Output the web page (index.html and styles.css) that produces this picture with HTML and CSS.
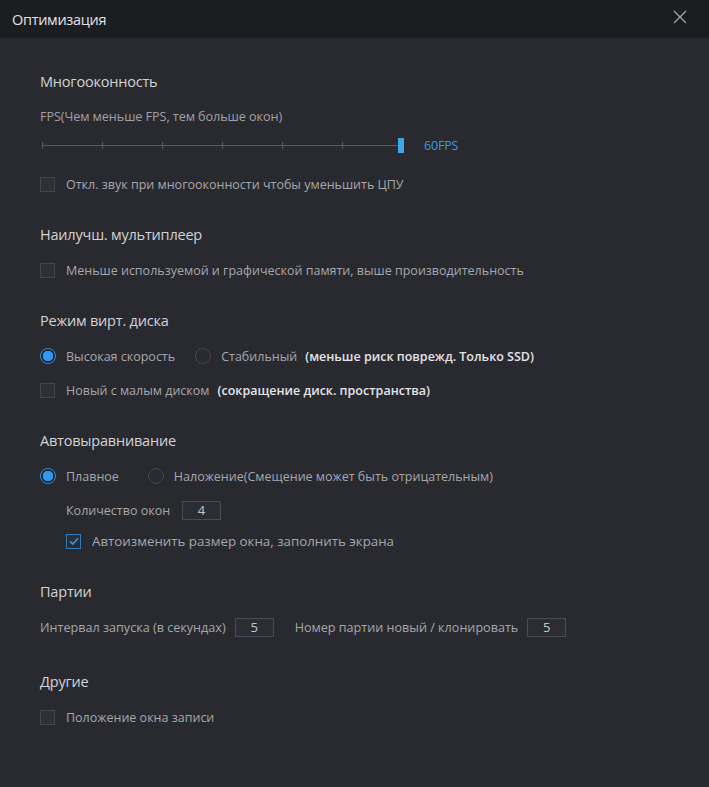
FILE: index.html
```html
<!DOCTYPE html>
<html lang="ru">
<head>
<meta charset="utf-8">
<title>Оптимизация</title>
<link rel="stylesheet" href="styles.css">
</head>
<body>
<div class="window">
  <header class="titlebar">
    <span class="title">Оптимизация</span>
    <svg class="close" width="14" height="14" viewBox="0 0 14 14"><path d="M1 1L13 13M13 1L1 13" stroke="#a9aaae" stroke-width="1.2" fill="none"/></svg>
  </header>
  <main class="content">
    <section class="section first">
      <h2 class="heading">Многооконность</h2>
      <div class="label">FPS(Чем меньше FPS, тем больше окон)</div>
      <div class="slider-row">
        <div class="slider">
          <div class="track"></div>
          <span class="tick" style="left:0px"></span>
          <span class="tick" style="left:60px"></span>
          <span class="tick" style="left:120px"></span>
          <span class="tick" style="left:180px"></span>
          <span class="tick" style="left:240px"></span>
          <span class="tick" style="left:300px"></span>
          <span class="thumb"></span>
        </div>
        <span class="fps">60FPS</span>
      </div>
      <div class="row gap-cb"><span class="cb"></span><span class="text">Откл. звук при многооконности чтобы уменьшить ЦПУ</span></div>
    </section>

    <section class="section">
      <h2 class="heading">Наилучш. мультиплеер</h2>
      <div class="row"><span class="cb"></span><span class="text">Меньше используемой и графической памяти, выше производительность</span></div>
    </section>

    <section class="section">
      <h2 class="heading">Режим вирт. диска</h2>
      <div class="row">
        <span class="radio on"></span><span class="text">Высокая скорость</span>
        <span class="radio opt2"></span><span class="text">Стабильный</span><span class="strong">(меньше риск поврежд. Только SSD)</span>
      </div>
      <div class="row"><span class="cb"></span><span class="text">Новый с малым диском</span><span class="strong">(сокращение диск. пространства)</span></div>
    </section>

    <section class="section">
      <h2 class="heading">Автовыравнивание</h2>
      <div class="row">
        <span class="radio on"></span><span class="text">Плавное</span>
        <span class="radio opt2b"></span><span class="text">Наложение(Смещение может быть отрицательным)</span>
      </div>
      <div class="row indent"><span class="text">Количество окон</span><span class="field wide-gap">4</span></div>
      <div class="row indent tight big"><span class="cb checked"><svg width="12" height="12" viewBox="0 0 12 12"><path d="M2 6.2L4.8 9L10 3.2" stroke="#3d93dc" stroke-width="1.6" fill="none"/></svg></span><span class="text">Автоизменить размер окна, заполнить экрана</span></div>
    </section>

    <section class="section">
      <h2 class="heading">Партии</h2>
      <div class="row mid">
        <span class="text">Интервал запуска (в секундах)</span><span class="field">5</span>
        <span class="text second">Номер партии новый / клонировать</span><span class="field">5</span>
      </div>
    </section>

    <section class="section last">
      <h2 class="heading">Другие</h2>
      <div class="row"><span class="cb"></span><span class="text">Положение окна записи</span></div>
    </section>
  </main>
</div>
</body>
</html>
```

FILE: styles.css
```css
* { box-sizing: border-box; }
html, body { margin: 0; padding: 0; }
body {
  background: #292a30;
  font-family: "Open Sans", "Noto Sans", sans-serif;
  color: #a6a7ab;
  width: 709px;
  height: 787px;
  overflow: hidden;
}
.window { width: 709px; height: 787px; background: #292a30; }
.titlebar {
  height: 38px;
  background: #1c1d21;
  display: flex;
  align-items: center;
  justify-content: space-between;
  padding: 0 22px 0 12px;
}
.title { color: #e2e2e4; font-size: 14.5px; letter-spacing: -0.3px; }
.close { display: block; margin-top: -4px; }
.content { padding: 0 40px; }
.section { margin-top: 31px; display: flex; flex-direction: column; }
.section.first { margin-top: 34px; }
.section.last { margin-top: 35px; }
.heading {
  margin: 0 0 15px 0;
  height: 20px;
  line-height: 20px;
  font-size: 14.5px;
  font-weight: 400;
  color: #d2d3d6;
  letter-spacing: -0.2px;
}
.label { height: 18px; line-height: 18px; font-size: 12.7px; color: #a0a1a5; letter-spacing: -0.1px; }
.slider-row { display: flex; align-items: center; height: 16px; margin-top: 12px; padding-left: 2px; }
.slider { position: relative; width: 362px; height: 16px; }
.track { position: absolute; left: 0; right: 6px; top: 8px; height: 1px; background: #595b62; }
.tick { position: absolute; top: 5px; width: 1px; height: 7px; background: #595b62; }
.thumb { position: absolute; right: 0; top: 1px; width: 6px; height: 15px; background: #3fa6ee; }
.fps { margin-left: 20px; font-size: 12.5px; color: #3a98dd; letter-spacing: -0.2px; }
.row {
  display: flex;
  align-items: center;
  height: 20px;
  font-size: 12.5px;
  white-space: nowrap;
}
.row.big { font-size: 13.3px; }
.row.mid { font-size: 12.6px; }
.row + .row { margin-top: 14px; }
.row.gap-cb { margin-top: 21px; }
.row.tight { margin-top: 11px; }
.row.indent { padding-left: 26px; }
.text { color: #a6a7ab; }
.strong { color: #e4e4e6; font-weight: 600; margin-left: 8px; }
.cb {
  width: 15px; height: 15px;
  border: 1px solid #45474f;
  background: #2e3037;
  margin-right: 11px;
  flex: none;
  display: flex; align-items: center; justify-content: center;
}
.cb.checked { border-color: #2e7bc0; background: #2a2d34; }
.cb svg { display: block; }
.radio {
  width: 16px; height: 16px;
  border-radius: 50%;
  border: 1px solid #45474f;
  margin-right: 10px;
  flex: none;
}
.radio.on {
  border: 1.5px solid #2f8de0;
  background: radial-gradient(circle, #2f97f2 0 5px, #23252b 5.5px 100%);
}
.radio.opt2 { margin-left: 20px; }
.radio.opt2b { margin-left: 29px; }
.field {
  width: 39px; height: 19px;
  border: 1px solid #4a4c55;
  background: #2b2d33;
  color: #c4c5c8;
  font-size: 13px;
  line-height: 17px;
  text-align: center;
  margin-left: 9px;
  flex: none;
}
.field.wide-gap { margin-left: 12px; }
.second { margin-left: 21px; }
```
